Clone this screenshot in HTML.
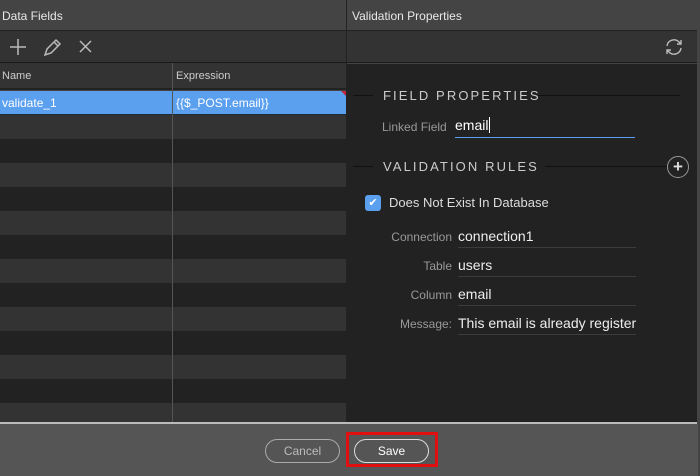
<!DOCTYPE html>
<html><head><style>
*{margin:0;padding:0;box-sizing:border-box}
body{width:700px;height:476px;background:#444;font-family:"Liberation Sans",sans-serif;position:relative;overflow:hidden;color:#ddd}
.abs{position:absolute}
.hdr{top:0;height:30px;background:#444;font-size:12px;color:#e8e8e8;line-height:33px;padding-left:2px}
.tb{top:30px;height:33px;background:#333;border-top:1px solid #222;border-bottom:1px solid #1a1a1a}
.row{position:absolute;left:0;width:346px;height:24px}
.lbl{position:absolute;font-size:12px;color:#999;text-align:right;width:104px;left:348px}
.val{position:absolute;left:458px;width:178px;border-bottom:1px solid #3c3c3c;font-size:14px;color:#eee;height:24px;line-height:22px;padding-top:1px}
.sec{position:absolute;font-size:13px;letter-spacing:2.1px;color:#ccc}
.line{position:absolute;height:1px;background:#111}
.btn{position:absolute;height:24px;border:1px solid #aaa;border-radius:12px;text-align:center;line-height:22px;font-size:12px}
</style></head><body>
<div class="abs hdr" style="left:0;width:346px">Data Fields</div>
<div class="abs hdr" style="left:347px;width:353px;padding-left:5px">Validation Properties</div>
<div class="abs" style="left:346px;top:0;width:1px;height:424px;background:#222"></div>
<div class="abs tb" style="left:0;width:346px">
<svg width="120" height="32" style="position:absolute;left:0;top:0" stroke="#bbb" fill="none" stroke-width="1.5">
<path d="M18 8v16M10 16h16"/>
<path d="M45 24l2-6 9-9 4 4-9 9z M54 11l4 4"/>
<path d="M80 10l11 11M91 10l-11 11"/>
</svg></div>
<div class="abs tb" style="left:347px;width:350px">
<svg width="22" height="22" style="position:absolute;left:316px;top:5px" stroke="#bbb" fill="none" stroke-width="1.4">
<path d="M4 10a7 7 0 0 1 12-4l2 2M18 4v4h-4M18 12a7 7 0 0 1-12 4l-2-2M4 18v-4h4"/></svg></div>
<div class="abs" style="left:0;top:63px;width:346px;height:27px;background:#333;border-bottom:2px solid #222;font-size:11px;color:#ccc;line-height:27px"><span style="position:absolute;left:2px">Name</span><span style="position:absolute;left:176px">Expression</span></div>
<div class="row" style="top:91px;background:#5b9fef;color:#fff;font-size:12px;line-height:24px;border-bottom:1px solid #1c2a3a"><span style="position:absolute;left:2px">validate_1</span><span style="position:absolute;left:176px">{{$_POST.email}}</span>
<div style="position:absolute;right:0;top:0;border-top:5px solid #c0243c;border-left:5px solid transparent"></div></div>
<div class="row" style="top:115px;background:#333"></div>
<div class="row" style="top:139px;background:#222"></div>
<div class="row" style="top:163px;background:#333"></div>
<div class="row" style="top:187px;background:#222"></div>
<div class="row" style="top:211px;background:#333"></div>
<div class="row" style="top:235px;background:#222"></div>
<div class="row" style="top:259px;background:#333"></div>
<div class="row" style="top:283px;background:#222"></div>
<div class="row" style="top:307px;background:#333"></div>
<div class="row" style="top:331px;background:#222"></div>
<div class="row" style="top:355px;background:#333"></div>
<div class="row" style="top:379px;background:#222"></div>
<div class="row" style="top:403px;background:#333;height:20px"></div>
<div class="abs" style="left:172px;top:63px;width:1px;height:360px;background:#555"></div>
<div class="abs" style="left:347px;top:64px;width:350px;height:358px;background:#222"></div>
<div class="abs" style="left:0;top:422px;width:697px;height:2px;background:#bbb"></div>
<div class="line" style="left:353px;top:95px;width:20px"></div>
<div class="line" style="left:538px;top:95px;width:142px"></div>
<div class="sec" style="left:383px;top:88px">FIELD PROPERTIES</div>
<div class="abs" style="left:382px;top:120px;font-size:12px;color:#999">Linked Field</div>
<div class="abs" style="left:455px;top:117px;width:180px;height:21px;border-bottom:1px solid #5b9fef;font-size:14px;color:#fff">email<span style="border-left:1px solid #fff;margin-left:1px"></span></div>
<div class="line" style="left:353px;top:166px;width:20px"></div>
<div class="line" style="left:545px;top:166px;width:122px"></div>
<div class="sec" style="left:383px;top:159px">VALIDATION RULES</div>
<div class="abs" style="left:667px;top:156px;width:22px;height:22px;border:1px solid #999;border-radius:50%;color:#ddd;text-align:center;line-height:19px;font-size:17px;font-weight:bold">+</div>
<div class="abs" style="left:365px;top:195px;width:16px;height:16px;background:#5b9fef;border-radius:3px;color:#fff;font-size:11px;text-align:center;line-height:16px">✔</div>
<div class="abs" style="left:389px;top:195px;font-size:13px;color:#ddd">Does Not Exist In Database</div>
<div class="lbl" style="top:230px">Connection</div><div class="val" style="top:224px">connection1</div>
<div class="lbl" style="top:259px">Table</div><div class="val" style="top:253px">users</div>
<div class="lbl" style="top:288px">Column</div><div class="val" style="top:282px">email</div>
<div class="lbl" style="top:317px">Message:</div><div class="val" style="top:311px;overflow:hidden;white-space:nowrap">This email is already registered</div>
<div class="abs" style="left:0;top:424px;width:698px;height:52px;background:#555"></div>
<div class="btn" style="left:265px;top:439px;width:75px;color:#bbb;border-color:#aaa">Cancel</div>
<div class="abs" style="left:346px;top:432px;width:92px;height:35px;border:3px solid #e01010"></div>
<div class="btn" style="left:354px;top:439px;width:75px;color:#fff;border-color:#ddd">Save</div>
</body></html>
